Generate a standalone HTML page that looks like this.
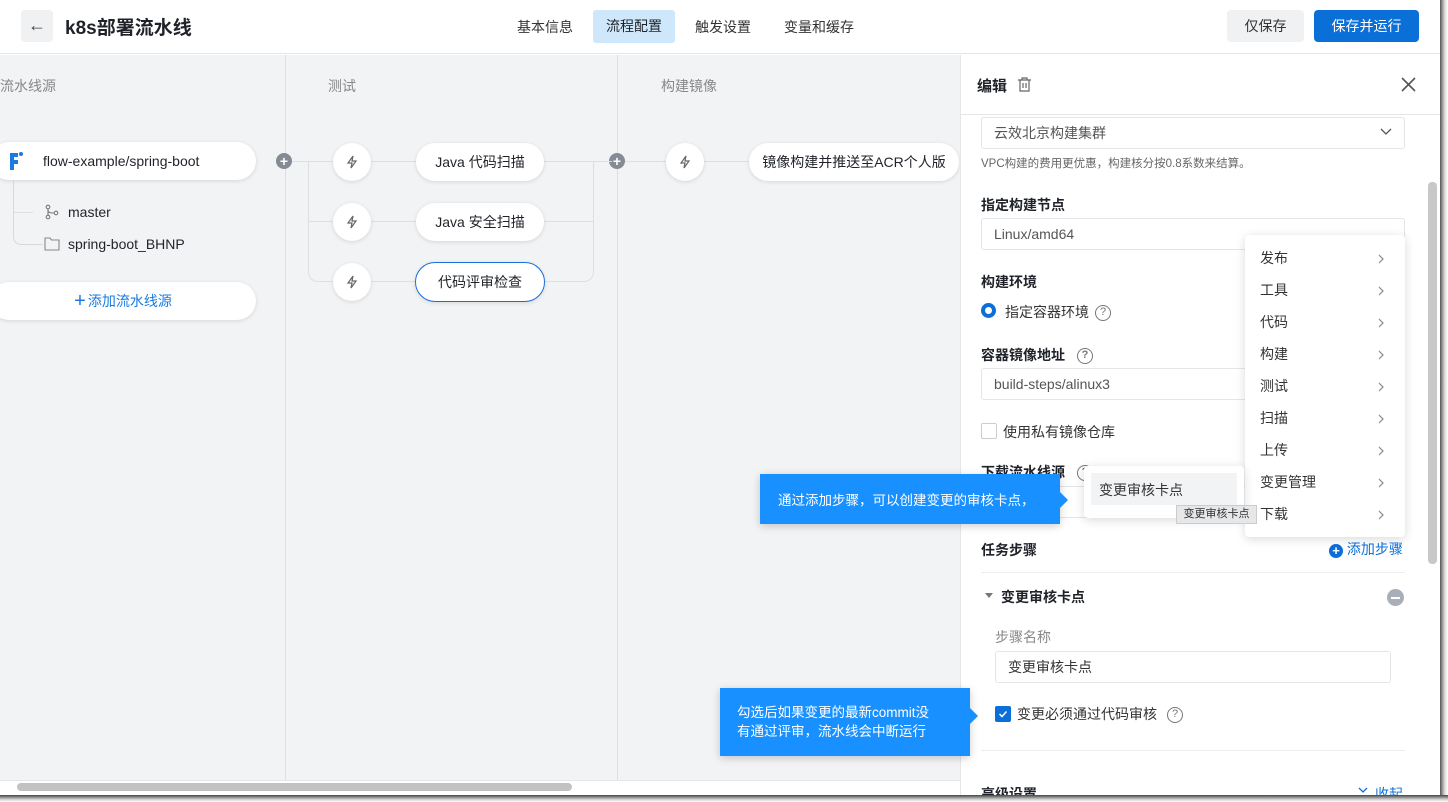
<!DOCTYPE html>
<html><head><meta charset="utf-8"><style>
*{box-sizing:border-box;margin:0;padding:0}
body{width:1448px;height:802px;overflow:hidden;background:#fff;font-family:"Liberation Sans","Noto Sans CJK SC",sans-serif;color:#1f2329;position:relative}
.a{position:absolute}
.pill{position:absolute;background:#fff;border-radius:20px;box-shadow:0 1px 4px rgba(0,0,0,.12);font-size:14px;display:flex;align-items:center;justify-content:center;color:#1f2329}
.circ{position:absolute;width:38px;height:38px;border-radius:50%;background:#fff;box-shadow:0 1px 4px rgba(0,0,0,.12);display:flex;align-items:center;justify-content:center}
.plus{position:absolute;width:16px;height:16px;border-radius:50%;background:#858b94;color:#fff;font-size:14px;line-height:16px;text-align:center;font-weight:bold}
.hl{position:absolute;height:1px;background:#dcdfe4}
.vl{position:absolute;width:1px;background:#dcdfe4}
.lbl{position:absolute;font-size:14px;color:#1f2329;font-weight:bold}
.inp{position:absolute;border:1px solid #e3e5e8;border-radius:3px;height:32px;font-size:14px;color:#555;padding:0 12px;display:flex;align-items:center}
.mi{position:absolute;left:1260px;font-size:14px;color:#333;width:130px;height:20px}
.mi svg{position:absolute;right:6px;top:6px}
.q{display:inline-block;width:16px;height:16px;border:1.5px solid #777;border-radius:50%;font-size:11px;line-height:13px;text-align:center;color:#777;vertical-align:middle;margin-left:6px}
</style></head><body>
<div class="a" style="left:0;top:0;width:1440px;height:54px;background:#fff;border-bottom:1px solid #e5e6e8"></div>
<div class="a" style="left:21px;top:10px;width:32px;height:32px;background:#f0f1f3;border-radius:4px;text-align:center;line-height:30px;font-size:18px;color:#444">←</div>
<div class="a" style="left:65px;top:13px;font-size:19px;font-weight:bold;color:#1f2329">k8s部署流水线</div>
<div class="a" style="left:517px;top:17px;font-size:14px;color:#333">基本信息</div>
<div class="a" style="left:593px;top:10px;width:82px;height:33px;background:#cfe7fb;border-radius:3px;font-size:14px;color:#1f2329;text-align:center;line-height:33px">流程配置</div>
<div class="a" style="left:695px;top:17px;font-size:14px;color:#333">触发设置</div>
<div class="a" style="left:784px;top:17px;font-size:14px;color:#333">变量和缓存</div>
<div class="a" style="left:1227px;top:10px;width:77px;height:32px;background:#f0f1f3;border-radius:4px;font-size:14px;color:#333;text-align:center;line-height:32px">仅保存</div>
<div class="a" style="left:1314px;top:10px;width:105px;height:32px;background:#0b6fd8;border-radius:4px;font-size:14px;color:#fff;text-align:center;line-height:32px">保存并运行</div>
<div class="a" style="left:0;top:55px;width:960px;height:725px;background:#f2f3f5"></div>
<div class="vl" style="left:285px;top:55px;height:725px"></div>
<div class="vl" style="left:617px;top:55px;height:725px"></div>
<div class="a" style="left:0;top:76px;font-size:14px;color:#888">流水线源</div>
<div class="a" style="left:328px;top:76px;font-size:14px;color:#888">测试</div>
<div class="a" style="left:661px;top:76px;font-size:14px;color:#888">构建镜像</div>
<div class="pill" style="left:-10px;top:142px;width:266px;height:38px;justify-content:flex-start;padding-left:53px">flow-example/spring-boot</div>
<svg class="a" style="left:8px;top:151px" width="16" height="20" viewBox="0 0 16 20"><path d="M2 2h8v4H6v3h4v4H6v6H2z" fill="#1a7be0"/><circle cx="13" cy="3" r="2" fill="#1a7be0"/></svg>
<div class="a" style="left:13px;top:180px;width:30px;height:65px;border-left:1px solid #d5d8dc;border-bottom:1px solid #d5d8dc;border-bottom-left-radius:8px"></div>
<div class="hl" style="left:13px;top:212px;width:20px"></div>
<svg class="a" style="left:44px;top:204px" width="16" height="16" viewBox="0 0 16 16"><circle cx="4" cy="3" r="1.8" fill="none" stroke="#777" stroke-width="1.1"/><circle cx="4" cy="13" r="1.8" fill="none" stroke="#777" stroke-width="1.1"/><circle cx="12" cy="9" r="1.8" fill="none" stroke="#777" stroke-width="1.1"/><path d="M4 5v6M4 6c0 3 3 3 6 3" fill="none" stroke="#777" stroke-width="1.1"/></svg>
<div class="a" style="left:68px;top:204px;font-size:14px">master</div>
<svg class="a" style="left:44px;top:237px" width="16" height="14" viewBox="0 0 16 14"><path d="M1 1h5l1.5 2H15v10H1z" fill="none" stroke="#888" stroke-width="1.1"/></svg>
<div class="a" style="left:68px;top:236px;font-size:14px">spring-boot_BHNP</div>
<div class="pill" style="left:-10px;top:282px;width:266px;height:38px;color:#1a7be0;font-size:14px"><span style="font-size:20px;margin-right:2px;line-height:1">+</span>添加流水线源</div>
<div class="plus" style="left:276px;top:153px">+</div>
<div class="plus" style="left:609px;top:153px">+</div>
<div class="hl" style="left:292px;top:161px;width:320px"></div>
<div class="a" style="left:308px;top:161px;width:286px;height:121px;border:1px solid #dcdfe4;border-top:none;border-radius:0 0 10px 10px"></div>
<div class="hl" style="left:308px;top:221px;width:286px"></div>
<div class="hl" style="left:625px;top:161px;width:130px"></div>
<div class="circ" style="left:333px;top:143px"><svg width="14" height="14" viewBox="0 0 14 14"><path d="M8 1L3 8h4l-1 5 5-7H7z" fill="none" stroke="#666" stroke-width="1.2"/></svg></div>
<div class="circ" style="left:333px;top:203px"><svg width="14" height="14" viewBox="0 0 14 14"><path d="M8 1L3 8h4l-1 5 5-7H7z" fill="none" stroke="#666" stroke-width="1.2"/></svg></div>
<div class="circ" style="left:333px;top:263px"><svg width="14" height="14" viewBox="0 0 14 14"><path d="M8 1L3 8h4l-1 5 5-7H7z" fill="none" stroke="#666" stroke-width="1.2"/></svg></div>
<div class="circ" style="left:666px;top:143px"><svg width="14" height="14" viewBox="0 0 14 14"><path d="M8 1L3 8h4l-1 5 5-7H7z" fill="none" stroke="#666" stroke-width="1.2"/></svg></div>
<div class="pill" style="left:416px;top:143px;width:128px;height:38px">Java 代码扫描</div>
<div class="pill" style="left:416px;top:203px;width:128px;height:38px">Java 安全扫描</div>
<div class="pill" style="left:415px;top:262px;width:130px;height:40px;border:1.5px solid #1a6fd8">代码评审检查</div>
<div class="pill" style="left:749px;top:143px;width:210px;height:38px">镜像构建并推送至ACR个人版</div>
<div class="a" style="left:0;top:780px;width:960px;height:15px;background:#fff;border-top:1px solid #e5e6e8"></div>
<div class="a" style="left:17px;top:783px;width:555px;height:8px;background:#c2c2c2;border-radius:4px"></div>
<div class="a" style="left:960px;top:55px;width:480px;height:740px;background:#fff;border-left:1px solid #e5e6e8"></div>
<div class="a" style="left:977px;top:75px;font-size:15px;font-weight:bold">编辑</div>
<svg class="a" style="left:1017px;top:77px" width="15" height="15" viewBox="0 0 15 15"><path d="M1 3h13M5 3V1h5v2M3 3v11h9V3M6 6v5M9 6v5" fill="none" stroke="#666" stroke-width="1.2"/></svg>
<svg class="a" style="left:1401px;top:77px" width="15" height="15" viewBox="0 0 15 15"><path d="M1 1l13 13M14 1L1 14" stroke="#555" stroke-width="1.6"/></svg>
<div class="hl" style="left:961px;top:114px;width:479px;background:#e5e6e8"></div>
<div class="a" style="left:1428px;top:182px;width:9px;height:382px;background:#c8c8c8;border-radius:4px"></div>
<div class="inp" style="left:981px;top:117px;width:424px">云效北京构建集群</div>
<svg class="a" style="left:1380px;top:128px" width="12" height="8" viewBox="0 0 12 8"><path d="M1 1l5 5 5-5" fill="none" stroke="#555" stroke-width="1.3"/></svg>
<div class="a" style="left:981px;top:155px;font-size:11.5px;color:#666">VPC构建的费用更优惠，构建核分按0.8系数来结算。</div>
<div class="lbl" style="left:981px;top:195px">指定构建节点</div>
<div class="inp" style="left:981px;top:218px;width:424px">Linux/amd64</div>
<div class="lbl" style="left:981px;top:272px">构建环境</div>
<div class="a" style="left:981px;top:303px;width:15px;height:15px;border:4px solid #0b6fd8;border-radius:50%"></div>
<div class="a" style="left:1005px;top:302px;font-size:14px;color:#333">指定容器环境<span class="q">?</span></div>
<div class="lbl" style="left:981px;top:345px">容器镜像地址<span class="q" style="margin-left:12px">?</span></div>
<div class="inp" style="left:981px;top:368px;width:424px">build-steps/alinux3</div>
<div class="a" style="left:981px;top:423px;width:16px;height:16px;border:1px solid #ccc;border-radius:2px"></div>
<div class="a" style="left:1003px;top:422px;font-size:14px;color:#333">使用私有镜像仓库</div>
<div class="lbl" style="left:981px;top:462px">下载流水线源<span class="q" style="margin-left:12px">?</span></div>
<div class="inp" style="left:981px;top:486px;width:424px"></div>
<div class="lbl" style="left:981px;top:540px">任务步骤</div>
<div class="a" style="left:1329px;top:539px;font-size:14px;color:#0b6fd8"><span style="display:inline-block;width:14px;height:14px;border-radius:50%;background:#0b6fd8;color:#fff;font-size:13px;line-height:14px;text-align:center;font-weight:bold;vertical-align:-1px">+</span> 添加步骤</div>
<div class="hl" style="left:981px;top:572px;width:424px;background:#ebedf0"></div>
<svg class="a" style="left:985px;top:593px" width="8" height="6" viewBox="0 0 8 6"><path d="M0 0h8L4 5z" fill="#777"/></svg>
<div class="lbl" style="left:1001px;top:587px">变更审核卡点</div>
<div class="a" style="left:1387px;top:589px;width:17px;height:17px;border-radius:50%;background:#a9afb8"><div style="margin:7.5px 4px;height:2px;background:#fff"></div></div>
<div class="a" style="left:995px;top:627px;font-size:14px;color:#888">步骤名称</div>
<div class="inp" style="left:995px;top:651px;width:396px;color:#333">变更审核卡点</div>
<div class="a" style="left:995px;top:706px;width:16px;height:16px;background:#0b6fd8;border-radius:2px"><svg width="16" height="16" viewBox="0 0 16 16"><path d="M4.5 8l2.5 2.5 4.5-5" fill="none" stroke="#fff" stroke-width="1.5"/></svg></div>
<div class="a" style="left:1017px;top:704px;font-size:14px;color:#333">变更必须通过代码审核<span class="q" style="margin-left:10px">?</span></div>
<div class="hl" style="left:981px;top:750px;width:424px;background:#ebedf0"></div>
<div class="a" style="left:981px;top:784px;font-size:14px;font-weight:bold;height:11px;overflow:hidden">高级设置</div>
<svg class="a" style="left:1358px;top:787px" width="10" height="7" viewBox="0 0 10 7"><path d="M1 1l4 4 4-4" fill="none" stroke="#0b6fd8" stroke-width="1.3"/></svg>
<div class="a" style="left:1375px;top:784px;font-size:14px;color:#0b6fd8;height:11px;overflow:hidden">收起</div>
<div class="a" style="left:1245px;top:235px;width:160px;height:302px;background:#fff;border-radius:4px;box-shadow:0 2px 10px rgba(0,0,0,.15)"></div>
<div class="mi" style="top:248px">发布<svg width="6" height="10" viewBox="0 0 6 10"><path d="M1 1l4 4-4 4" fill="none" stroke="#888" stroke-width="1.2"/></svg></div>
<div class="mi" style="top:280px">工具<svg width="6" height="10" viewBox="0 0 6 10"><path d="M1 1l4 4-4 4" fill="none" stroke="#888" stroke-width="1.2"/></svg></div>
<div class="mi" style="top:312px">代码<svg width="6" height="10" viewBox="0 0 6 10"><path d="M1 1l4 4-4 4" fill="none" stroke="#888" stroke-width="1.2"/></svg></div>
<div class="mi" style="top:344px">构建<svg width="6" height="10" viewBox="0 0 6 10"><path d="M1 1l4 4-4 4" fill="none" stroke="#888" stroke-width="1.2"/></svg></div>
<div class="mi" style="top:376px">测试<svg width="6" height="10" viewBox="0 0 6 10"><path d="M1 1l4 4-4 4" fill="none" stroke="#888" stroke-width="1.2"/></svg></div>
<div class="mi" style="top:408px">扫描<svg width="6" height="10" viewBox="0 0 6 10"><path d="M1 1l4 4-4 4" fill="none" stroke="#888" stroke-width="1.2"/></svg></div>
<div class="mi" style="top:440px">上传<svg width="6" height="10" viewBox="0 0 6 10"><path d="M1 1l4 4-4 4" fill="none" stroke="#888" stroke-width="1.2"/></svg></div>
<div class="mi" style="top:472px">变更管理<svg width="6" height="10" viewBox="0 0 6 10"><path d="M1 1l4 4-4 4" fill="none" stroke="#888" stroke-width="1.2"/></svg></div>
<div class="mi" style="top:504px">下载<svg width="6" height="10" viewBox="0 0 6 10"><path d="M1 1l4 4-4 4" fill="none" stroke="#888" stroke-width="1.2"/></svg></div>
<div class="a" style="left:1084px;top:466px;width:160px;height:52px;background:#fff;border-radius:4px;box-shadow:0 2px 10px rgba(0,0,0,.15)"></div>
<div class="a" style="left:1091px;top:473px;width:146px;height:32px;background:#f2f3f5;font-size:14px;color:#333;padding:7px 8px">变更审核卡点</div>
<div class="a" style="left:1176px;top:505px;width:81px;height:19px;background:#e6e7e9;border:1px solid #ccc;font-size:11px;color:#333;text-align:center;line-height:17px">变更审核卡点</div>
<div class="a" style="left:760px;top:474px;width:300px;height:50px;background:#1890ff;color:#fff;font-size:13.5px;padding:15px 18px;box-shadow:0 2px 8px rgba(0,0,0,.2)">通过添加步骤，可以创建变更的审核卡点，</div>
<div class="a" style="left:1060px;top:492px;width:0;height:0;border-top:8px solid transparent;border-bottom:8px solid transparent;border-left:8px solid #1890ff"></div>
<div class="a" style="left:720px;top:688px;width:250px;height:68px;background:#1890ff;color:#fff;font-size:13.5px;line-height:19px;padding:15px 0 0 17px;white-space:nowrap;box-shadow:0 2px 8px rgba(0,0,0,.2)">勾选后如果变更的最新commit没<br>有通过评审，流水线会中断运行</div>
<div class="a" style="left:970px;top:708px;width:0;height:0;border-top:8px solid transparent;border-bottom:8px solid transparent;border-left:8px solid #1890ff"></div>
<div class="a" style="left:1440px;top:0;width:8px;height:802px;background:linear-gradient(90deg,#555,#ddd 60%,#fff)"></div>
<div class="a" style="left:0;top:795px;width:1448px;height:7px;background:linear-gradient(#444,#ccc 60%,#fff)"></div>
</body></html>
